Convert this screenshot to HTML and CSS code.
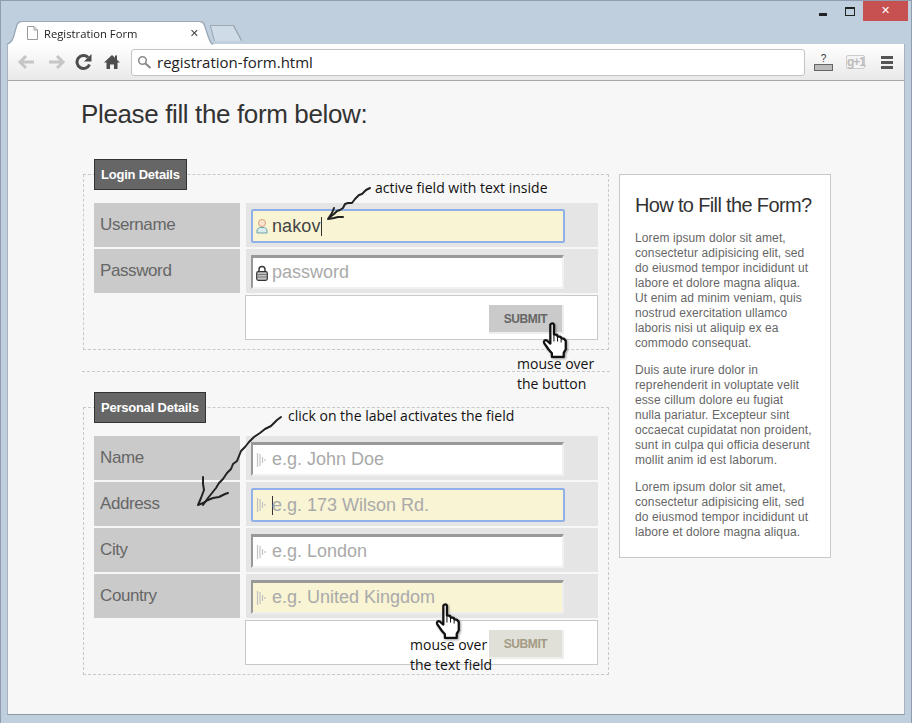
FILE: index.html
```html
<!DOCTYPE html>
<html lang="en">
<head>
	<meta charset="UTF-8">
	<title>Registration Form</title>
	<link rel="stylesheet" href="styles.css">
</head>
<body>
	<div class="window">
		<div class="titlebar">
			<div class="tabs">
				<div class="tab">
					<svg class="tab-doc" width="11" height="14" viewBox="0 0 11 14"><path d="M.5.5h6.5l3.500 3.500v9.500h-10z M7 .5v3.500h3.500" fill="#fff" stroke="#9a9a9a"/></svg>
					<span class="tab-title">Registration Form</span>
					<span class="tab-close">✕</span>
				</div>
				<div class="tab-new"></div>
			</div>
			<div class="win-controls">
				<span class="win-min"></span>
				<span class="win-max"></span>
				<span class="win-close">✕</span>
			</div>
		</div>
		<div class="browser">
			<div class="toolbar">
				<svg class="nav" width="20" height="16" viewBox="0 0 20 16"><path d="M9 2 3 8l6 6M3 8h14" fill="none" stroke="#c6c6c6" stroke-width="3"/></svg>
				<svg class="nav" width="20" height="16" viewBox="0 0 20 16"><path d="m11 2 6 6-6 6M17 8H3" fill="none" stroke="#c6c6c6" stroke-width="3"/></svg>
				<svg class="nav nav-wide" width="18" height="18" viewBox="0 0 18 18"><path d="M14.500 11.500A6.500 6.500 0 1 1 13 4.300" fill="none" stroke="#4d4d4d" stroke-width="3"/><path d="M16.500 1v7.500H9z" fill="#4d4d4d"/></svg>
				<svg class="nav nav-wide" width="16" height="16" viewBox="0 0 16 16"><path d="M8 1 0 8.500h2.500V15H6v-4.500h4V15h3.500V8.500H16L13 5.700V1.500h-2v2.300z" fill="#4d4d4d"/></svg>
				<div class="omnibox">
					<svg width="15" height="15" viewBox="0 0 15 15"><circle cx="5.500" cy="5.500" r="3.800" fill="none" stroke="#8a8a8a" stroke-width="1.600"/><path d="m8.500 8.500 5 4.500" stroke="#8a8a8a" stroke-width="2.200"/></svg>
					<span>registration-form.html</span>
				</div>
				<div class="tool-help"><span>?</span><i></i></div>
				<div class="tool-gplus">g+1</div>
				<div class="tool-menu"><i></i><i></i><i></i></div>
			</div>
			<div class="page">
				<h1>Please fill the form below:</h1>
				<div class="columns">
					<form class="reg-form">
						<fieldset class="group">
							<legend>Login Details</legend>
							<div class="row">
								<label class="row-label">Username</label>
								<div class="row-field">
									<div class="input input-active">
										<svg class="ico" width="12" height="16" viewBox="0 0 12 16"><circle cx="6" cy="5" r="3.500" fill="#fbe3cf" stroke="#d9a27e"/><path d="M1 15v-3.500L3.500 9.500h5l2.500 2V15z" fill="#d8ecee" stroke="#6fa3ad"/></svg>
										<span class="val">nakov</span><span class="caret"></span>
									</div>
								</div>
							</div>
							<div class="row">
								<label class="row-label">Password</label>
								<div class="row-field">
									<div class="input">
										<svg class="ico" width="12" height="16" viewBox="0 0 12 16"><path d="M3 7V4.500a3 3 0 0 1 6 0V7" fill="none" stroke="#333" stroke-width="1.400"/><rect x=".7" y="6.700" width="10.600" height="8.600" rx="1.500" fill="#c4c4c4" stroke="#333" stroke-width="1.200"/><path d="M1 9.500h10M1 12h10" stroke="#777"/></svg>
										<span class="ph">password</span>
									</div>
								</div>
							</div>
							<div class="submit-row">
								<button type="button" class="submit submit-hover">SUBMIT</button>
							</div>
						</fieldset>
						<hr class="divider">
						<fieldset class="group">
							<legend>Personal Details</legend>
							<div class="row">
								<label class="row-label">Name</label>
								<div class="row-field">
									<div class="input">
										<svg class="ico ico-pen" width="11" height="14" viewBox="0 0 11 14"><path d="M1.500 0v14M4 1v12M6.500 4v6M9 6v2" stroke="#c2c2c2" stroke-width="1.200"/></svg>
										<span class="ph">e.g. John Doe</span>
									</div>
								</div>
							</div>
							<div class="row">
								<label class="row-label">Address</label>
								<div class="row-field">
									<div class="input input-active">
										<svg class="ico ico-pen" width="11" height="14" viewBox="0 0 11 14"><path d="M1.500 0v14M4 1v12M6.500 4v6M9 6v2" stroke="#c2c2c2" stroke-width="1.200"/></svg>
										<span class="caret caret-first"></span><span class="ph">e.g. 173 Wilson Rd.</span>
									</div>
								</div>
							</div>
							<div class="row">
								<label class="row-label">City</label>
								<div class="row-field">
									<div class="input">
										<svg class="ico ico-pen" width="11" height="14" viewBox="0 0 11 14"><path d="M1.500 0v14M4 1v12M6.500 4v6M9 6v2" stroke="#c2c2c2" stroke-width="1.200"/></svg>
										<span class="ph">e.g. London</span>
									</div>
								</div>
							</div>
							<div class="row">
								<label class="row-label">Country</label>
								<div class="row-field">
									<div class="input input-hover">
										<svg class="ico ico-pen" width="11" height="14" viewBox="0 0 11 14"><path d="M1.500 0v14M4 1v12M6.500 4v6M9 6v2" stroke="#c2c2c2" stroke-width="1.200"/></svg>
										<span class="ph">e.g. United Kingdom</span>
									</div>
								</div>
							</div>
							<div class="submit-row">
								<button type="button" class="submit">SUBMIT</button>
							</div>
						</fieldset>
					</form>
					<aside class="help">
						<h2>How to Fill the Form?</h2>
						<p>Lorem ipsum dolor sit amet, consectetur adipisicing elit, sed do eiusmod tempor incididunt ut labore et dolore magna aliqua.<br>Ut enim ad minim veniam, quis nostrud exercitation ullamco laboris nisi ut aliquip ex ea commodo consequat.</p>
						<p>Duis aute irure dolor in reprehenderit in voluptate velit esse cillum dolore eu fugiat<br>nulla pariatur. Excepteur sint occaecat cupidatat non proident, sunt in culpa qui officia deserunt mollit anim id est laborum.</p>
						<p>Lorem ipsum dolor sit amet, consectetur adipisicing elit, sed do eiusmod tempor incididunt ut labore et dolore magna aliqua.</p>
					</aside>
				</div>
			</div>
		</div>

		<!-- annotations drawn over the screenshot -->
		<svg class="scribbles" width="912" height="723" viewBox="0 0 912 723">
			<g fill="none" stroke="#222" stroke-width="2" stroke-linecap="round" stroke-linejoin="round">
				<path d="M370 188l-4 2-4 4-3 1-4 4-3 4-4 0-3 1-2 4-3 2-3 1-3 3-4 3"/>
				<path d="M334 208l-2 5-4 6 6-1 4-1 5 0"/>
				<path d="M281 417l-4 3-6 6-6 3-5 4-6 4-5 5-4 5-4 4-2 5-2 5-4 3-2 5-4 4-4 6-4 4-3 5-4 5-4 5-5 7"/>
				<path d="M203 477l0 7 1 6-3 8-3 7 5-2 5-3 5-2 6-1 6-3 3-1"/>
			</g>
		</svg>
		<span class="note note-active">active field with text inside</span>
		<span class="note note-button">mouse over<br>the button</span>
		<span class="note note-label">click on the label activates the field</span>
		<span class="note note-field">mouse over<br>the text field</span>
		<svg class="hand hand-button" width="30" height="37" viewBox="0 0 28 36"><path d="M8.500 2.500c1-1.500 3-1.500 3.500 0V12l3 .5 .5 1.500 3 .5 1 1.500 2.500.5 1.500 2v8l-2 3.500v4H10v-3.500L7 27 2.500 20.500c-1-2 1-3.500 2.500-2.500L8.500 21z" fill="#fff" stroke="#111" stroke-width="2.200" stroke-linejoin="round"/><path d="M12 12v7M15.500 14v5M19 15.500V20" stroke="#111"/></svg>
		<svg class="hand hand-field" width="30" height="37" viewBox="0 0 28 36"><path d="M8.500 2.500c1-1.500 3-1.500 3.500 0V12l3 .5 .5 1.500 3 .5 1 1.500 2.500.5 1.500 2v8l-2 3.500v4H10v-3.500L7 27 2.500 20.500c-1-2 1-3.500 2.500-2.500L8.500 21z" fill="#fff" stroke="#111" stroke-width="2.200" stroke-linejoin="round"/><path d="M12 12v7M15.500 14v5M19 15.500V20" stroke="#111"/></svg>
	</div>
</body>
</html>
```
FILE: styles.css
```css
* {
	box-sizing: border-box;
}
html, body {
	margin: 0;
	padding: 0;
	height: 100%;
	overflow: hidden;
	background: #bfcfde;
}
body {
	font-family: "Liberation Sans", Arial, sans-serif;
}
.window {
	position: relative;
	width: 912px;
	height: 723px;
	border: 1px solid #8f9daf;
	border-bottom: 0;
	padding: 0 6px 8px;
	display: flex;
	flex-direction: column;
}

/* title bar + tabs */
.titlebar {
	height: 43px;
	flex: none;
	display: flex;
	align-items: flex-end;
	position: relative;
}
.tabs {
	display: flex;
	align-items: flex-end;
	filter: drop-shadow(0 -1px 0 #9aa7b5) drop-shadow(1px 0 0 #9aa7b5) drop-shadow(-1px 0 0 #9aa7b5);
}
.tab {
	width: 206px;
	height: 25px;
	background: #fff;
	clip-path: path("M0 25C5 23 7 19 8 14L10 7C11 3 13 2 16 2L191 2C195 2 196 3 197 6L201 18C203 22 203 24 206 25Z");
	display: flex;
	align-items: center;
	padding: 1px 14px 0 20px;
	transform: translateY(1px);
}
.tab-doc {
	margin-right: 6px;
}
.tab-title {
	flex: 1;
	font: 11.25px "Open Sans", sans-serif;
	color: #222;
}
.tab-close {
	font-size: 11px;
	color: #444;
	font-family: "DejaVu Sans", sans-serif;
}
.tab-new {
	width: 31px;
	height: 16px;
	margin: 0 0 2px -2px;
	background: #cfdbe7;
	clip-path: polygon(0 0, 22px 0, 30px 15px, 4px 15px);
}
.win-controls {
	position: absolute;
	top: 0;
	right: -3px;
	display: flex;
	align-items: flex-start;
}
.win-min {
	width: 8px;
	height: 3px;
	background: #222;
	margin: 12px 18px 0 0;
}
.win-max {
	width: 10px;
	height: 9px;
	border: 1px solid #222;
	border-top-width: 2px;
	margin: 6px 8px 0 0;
}
.win-close {
	width: 45px;
	height: 20px;
	background: #c75050;
	color: #fff;
	font: bold 11px/20px "DejaVu Sans", sans-serif;
	text-align: center;
}

/* browser chrome */
.browser {
	flex: 1;
	display: flex;
	flex-direction: column;
	border: 1px solid #a9b1ba;
	border-bottom-color: #8e98a3;
	border-top: 0;
	min-height: 0;
}
.toolbar {
	height: 37px;
	flex: none;
	display: flex;
	align-items: center;
	padding: 0 10px 0 9px;
	background: linear-gradient(#fff, #e9e9e9);
	border-bottom: 1px solid #a8a8a8;
}
.nav {
	margin-right: 9px;
	flex: none;
}
.nav-wide {
	margin-right: 11px;
}
.omnibox {
	width: 674px;
	height: 27px;
	flex: none;
	background: #fff;
	border: 1px solid #c4c4c4;
	border-radius: 3px;
	display: flex;
	align-items: center;
	gap: 5px;
	padding-left: 5px;
	font: 15px "Open Sans", sans-serif;
	color: #222;
}
.tool-help {
	width: 19px;
	flex: none;
	margin-left: 9px;
	text-align: center;
	font-size: 10px;
	line-height: 10px;
	color: #333;
}
.tool-help span {
	display: block;
}
.tool-help i {
	display: block;
	height: 7px;
	background: #bbb;
	border: 1px solid #666;
}
.tool-gplus {
	width: 19px;
	height: 14px;
	flex: none;
	margin-left: 13px;
	border: 1px solid #ccc;
	border-radius: 2px;
	background: #f4f4f4;
	color: #bbb;
	font-size: 12px;
	font-weight: 700;
	letter-spacing: -1px;
	line-height: 12px;
	text-align: center;
}
.tool-menu {
	flex: none;
	margin-left: 16px;
}
.tool-menu i {
	display: block;
	width: 12px;
	height: 3px;
	background: #555;
	margin: 2px 0;
}

/* page */
.page {
	flex: 1;
	background: #f7f7f7;
	padding: 0 0 0 74px;
	min-height: 0;
	overflow: hidden;
}
h1 {
	margin: 17px 0 0 -1px;
	font-size: 26px;
	line-height: 33px;
	font-weight: 400;
	letter-spacing: -0.37px;
	color: #333;
}
.columns {
	display: flex;
	align-items: flex-start;
	gap: 9px;
	margin-top: 28px;
}
.reg-form {
	width: 528px;
	flex: none;
}
.group {
	margin: 0 0 0 1px;
	width: 526px;
	padding: 13px 10px 9px;
	border: 1px dashed #c9c9c9;
	border-radius: 0;
	position: relative;
}
.group legend {
	padding: 0 6px;
	height: 31px;
	line-height: 29px;
	background: #666;
	border: 1px solid #333;
	color: #fff;
	font-size: 13px;
	font-weight: 700;
	letter-spacing: -0.22px;
}
.row {
	display: flex;
	gap: 6px;
	height: 44px;
	margin-bottom: 2px;
}
.row-label {
	width: 146px;
	flex: none;
	padding: 12px 6px 0;
	background: #cacaca;
	color: #666;
	font-size: 17px;
	letter-spacing: -0.4px;
	line-height: 20px;
}
.row-field {
	flex: 1;
	background: #e5e5e5;
	padding: 6px 34px 4px 5px;
}
.input {
	height: 34px;
	background: #fff;
	border: 2px solid #f1f1f1;
	border-top-color: #999;
	border-left-color: #999;
	border-top-width: 3px;
	border-left-width: 2px;
	display: flex;
	align-items: center;
	padding-left: 3px;
	font-size: 18px;
}
.input-active {
	background: #f8f4d4;
	border: 2px solid #8fb0e8;
	border-radius: 2px;
	margin-right: -1px;
}
.input-hover {
	background: #f8f4d4;
	border-right-color: #eee;
	border-bottom-color: #eee;
}
.ico {
	flex: none;
	margin-right: 4px;
}
.ico-pen {
	margin-right: 5px;
}
.val {
	color: #444;
	letter-spacing: 0.1px;
}
.ph {
	color: #aaa;
}
.caret {
	width: 1px;
	height: 19px;
	background: #333;
}
.caret-first {
	margin-right: -1px;
}
.submit-row {
	margin-left: 151px;
	height: 45px;
	background: #fff;
	border: 1px solid #c9c9c9;
	display: flex;
	justify-content: flex-end;
	align-items: center;
	padding: 4px 33px 0 0;
}
.submit {
	width: 75px;
	height: 29px;
	padding: 0;
	background: #e0e0d8;
	border: 0;
	border-right: 2px solid #eeeeea;
	border-bottom: 2px solid #eeeeea;
	color: #a39b84;
	font: bold 12px "Liberation Sans", sans-serif;
	letter-spacing: -0.4px;
}
.submit-hover {
	background: #cacaca;
	color: #666;
}
.divider {
	margin: 21px 0 20px;
	height: 0;
	width: 528px;
	border: 0;
	border-top: 1px dashed #c9c9c9;
}

/* help box */
.help {
	width: 212px;
	flex: none;
	height: 384px;
	margin-top: 15px;
	padding: 0 14px 0 15px;
	background: #fff;
	border: 1px solid #c9c9c9;
	color: #666;
	font-size: 12px;
	letter-spacing: 0.1px;
	line-height: 15px;
}
.help h2 {
	margin: 18px 0 14px;
	font-size: 20px;
	line-height: 24px;
	font-weight: 400;
	letter-spacing: -0.65px;
	white-space: nowrap;
	color: #333;
}
.help p {
	margin: 0 0 12px;
}

/* annotations over the screenshot */
.scribbles {
	position: absolute;
	left: -1px;
	top: -1px;
	pointer-events: none;
}
.note {
	position: absolute;
	font: 14px/20px "Open Sans", sans-serif;
	color: #111;
	white-space: nowrap;
}
.note-active { left: 374px; top: 177px; }
.note-button { left: 516px; top: 353px; }
.note-label { left: 287px; top: 405px; }
.note-field { left: 409px; top: 634px; }
.hand {
	position: absolute;
	filter: drop-shadow(1px 1px 1px rgb(0 0 0 / 0.4));
}
.hand-button { left: 540px; top: 321px; }
.hand-field { left: 433px; top: 602px; }
```
